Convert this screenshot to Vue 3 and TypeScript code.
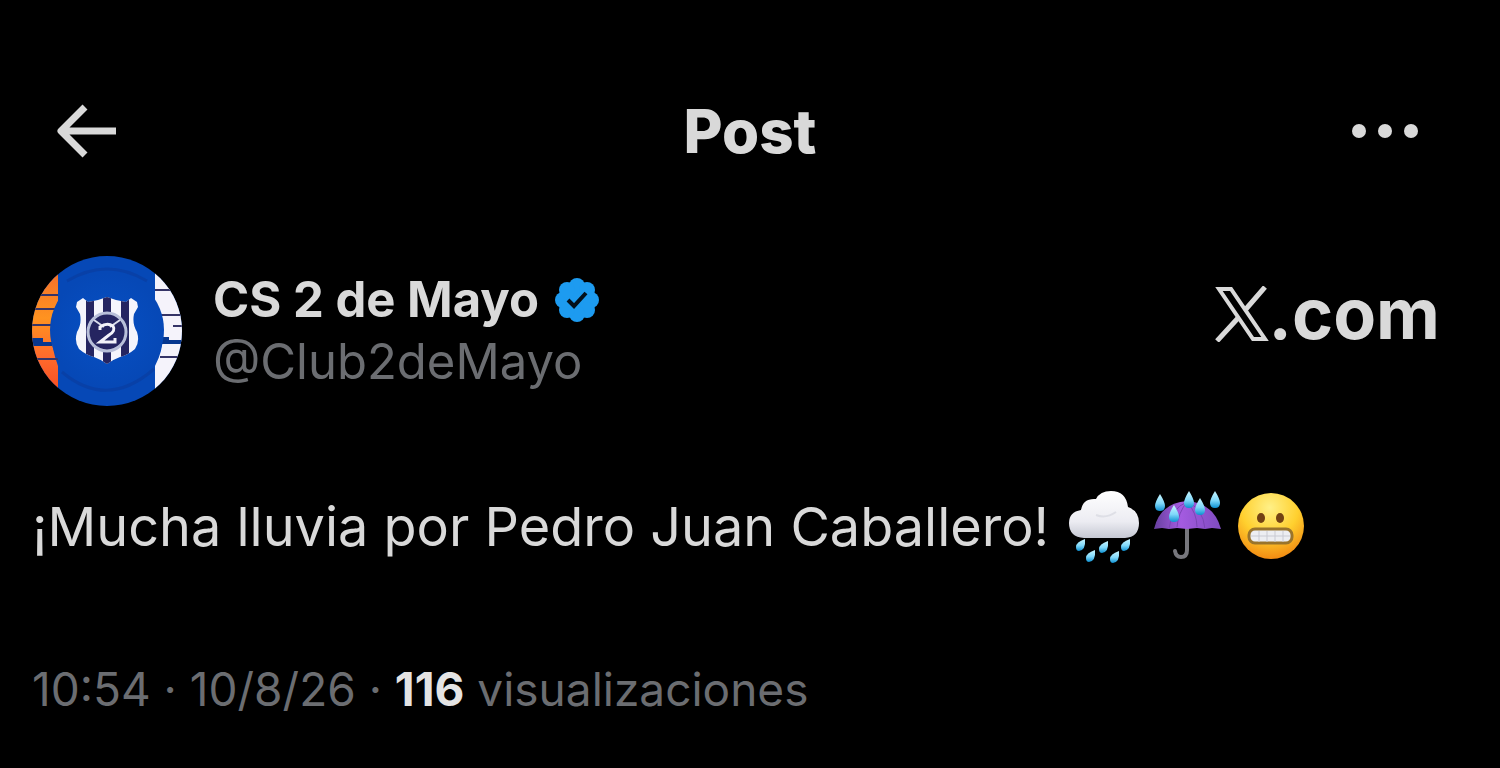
<script setup lang="ts">
interface Post {
  name: string
  handle: string
  body: string
  time: string
  date: string
  views: number
}

const post: Post = {
  name: 'CS 2 de Mayo',
  handle: '@Club2deMayo',
  body: '¡Mucha lluvia por Pedro Juan Caballero!',
  time: '10:54',
  date: '10/8/26',
  views: 116,
}

// Tips of the drops around the umbrella
const umbrellaDrops: [number, number][] = [[7, 3], [36, 0], [62, 0], [21, 14], [47, 7]]
// Drops falling below the cloud
const cloudDrops: [number, number][] = [[9, 48], [32, 50], [54, 48], [19, 59], [43, 60]]
</script>

<template>
  <main class="page">
    <header class="bar">
      <button class="icon-button" type="button" aria-label="Atrás">
        <svg width="60" height="54" viewBox="0 0 60 54" fill="none" stroke="currentColor" stroke-width="7" stroke-linejoin="round">
          <path d="M29 3 5 27l24 24M5 27h55" />
        </svg>
      </button>
      <h1 class="title">Post</h1>
      <button class="icon-button end" type="button" aria-label="Más opciones">
        <svg width="66" height="16" viewBox="0 0 66 16" fill="currentColor">
          <circle cx="7" cy="8" r="7" /><circle cx="33" cy="8" r="7" /><circle cx="59" cy="8" r="7" />
        </svg>
      </button>
    </header>

    <article>
      <div class="author">
        <svg class="avatar" width="150" height="150" viewBox="0 0 150 150" role="img" aria-label="Escudo del club">
          <defs>
            <clipPath id="avatar-clip"><circle cx="75" cy="75" r="75" /></clipPath>
            <clipPath id="shield-clip"><path d="M45 46l6-4 5 4 10-2 9-3 9 3 10 2 5-4 6 4 1 5-4 7q-2 10 3 18 3 10-2 17-7 6-15 8-8 3-13 7-5-4-13-7-8-2-15-8-5-7-2-17 5-8 3-18l-4-7z" /></clipPath>
            <linearGradient id="orange" x1="0" y1="0" x2="0" y2="1">
              <stop offset="0" stop-color="#f26b2c" /><stop offset=".4" stop-color="#ff9320" /><stop offset=".7" stop-color="#ff6a2c" /><stop offset="1" stop-color="#f34b22" />
            </linearGradient>
            <radialGradient id="blue">
              <stop offset="0" stop-color="#0750c4" /><stop offset="1" stop-color="#0648b6" />
            </radialGradient>
          </defs>
          <g clip-path="url(#avatar-clip)">
            <rect width="150" height="150" fill="#0648b6" />
            <path d="M0 10h26v35q-13 30 0 65v30H0z" fill="url(#orange)" />
            <path d="M123 10h27v130h-27v-30q16-30 0-65z" fill="#f5f3fb" />
            <g stroke="#353467" stroke-width="2">
              <path d="M0 39h26M0 53h24M0 69h20M0 103h26" />
              <path d="M123 34h27M128 59h22M141 70h9M128 101h22" />
            </g>
            <path d="M0 82h11v4h9v4H0zM130 81h7v3h13v4h-20z" fill="#07378f" />
            <circle cx="75" cy="74" r="57" fill="url(#blue)" />
            <path d="M30 116q45 38 92-3M35 25q40-24 80 0" fill="none" stroke="#0a3795" stroke-width="3" opacity=".45" />
            <g clip-path="url(#shield-clip)">
              <rect x="40" y="38" width="70" height="75" fill="#f5f5fc" />
              <path d="M54 38h8v75h-8zM71 38h8v75h-8zM89 38h8v75h-8z" fill="#252561" />
            </g>
            <circle cx="75" cy="76" r="19" fill="#252561" stroke="#b8bfd9" stroke-width="3" />
            <path d="M62 64l10 7M88 64l-10 7" fill="none" stroke="#d9dcec" stroke-width="2" />
            <path d="M68 74v-3q7-5 13-1 3 5-4 9l-9 7h15v-4" fill="none" stroke="#f2f2fa" stroke-width="3" />
          </g>
        </svg>
        <div class="identity">
          <div class="name-row">
            <strong class="name">{{ post.name }}</strong>
            <svg width="44" height="44" viewBox="0 0 44 44" role="img" aria-label="Cuenta verificada">
              <g fill="#1d9bf0">
                <circle cx="22" cy="22" r="18" />
                <circle cx="22" cy="8" r="8" /><circle cx="32" cy="12" r="8" />
                <circle cx="36" cy="22" r="8" /><circle cx="32" cy="32" r="8" />
                <circle cx="22" cy="36" r="8" /><circle cx="12" cy="32" r="8" />
                <circle cx="8" cy="22" r="8" /><circle cx="12" cy="12" r="8" />
              </g>
              <path d="M13 22l6 6 12-13" fill="none" stroke="#03101c" stroke-width="4" />
            </svg>
          </div>
          <a class="handle" href="#">{{ post.handle }}</a>
        </div>
        <div class="brand">
          <svg width="54" height="56" viewBox="0 0 54 56" fill="none" stroke="currentColor" stroke-width="4" role="img" aria-label="X">
            <path d="M4 3h12l34 50H38z" />
            <path d="M50 1 31 23M2 55l22-24" stroke-width="5" />
          </svg>
          <span>.com</span>
        </div>
      </div>

      <p class="body">
        <span>{{ post.body }}</span>
        <span class="emojis">
          <svg width="70" height="72" viewBox="0 0 70 72" role="img" aria-label="Nube con lluvia">
            <defs>
              <linearGradient id="cloud" x1="0" y1="0" x2="0" y2="1">
                <stop offset="0" stop-color="#fff" /><stop offset=".65" stop-color="#ececf2" /><stop offset="1" stop-color="#c5c8d3" />
              </linearGradient>
              <linearGradient id="drop" x1="0" y1="0" x2="0" y2="1">
                <stop offset="0" stop-color="#c8f5ff" /><stop offset=".55" stop-color="#7fd8fa" /><stop offset="1" stop-color="#0c8fd0" />
              </linearGradient>
            </defs>
            <path d="M15 47Q0 46 0 32q0-11 12-13 2-12 15-11 4-8 15-8 15 0 17 16 11 4 11 16 0 14-14 15z" fill="url(#cloud)" />
            <path d="M27 24q10 4 20-3" fill="none" stroke="#dedfe6" stroke-width="2" />
            <g v-for="([x, y], i) in cloudDrops" :key="i" :transform="`translate(${x} ${y})`">
              <path d="M7 0Q-2 3-2 8q0 4 3 4 7-1 6-12z" fill="url(#drop)" />
            </g>
          </svg>
          <svg width="70" height="72" viewBox="0 0 70 72" role="img" aria-label="Paraguas con gotas de lluvia">
            <defs>
              <linearGradient id="canopy" x1="0" y1="0" x2="1" y2="0">
                <stop offset="0" stop-color="#67409f" /><stop offset=".4" stop-color="#a45be0" /><stop offset="1" stop-color="#7f4bc0" />
              </linearGradient>
            </defs>
            <path d="M34 35v24q0 7-6 7-5 0-6-6" fill="none" stroke="#77777d" stroke-width="4" stroke-linecap="round" />
            <path d="M1 38Q7 12 34 10q27 2 34 28l-9-1-7 1-8-1-10 1-10-1-8 1-7-1z" fill="url(#canopy)" />
            <path d="M34 11Q18 17 16 38M34 11q-9 11-10 25M34 11q10 11 10 25M34 11q16 6 18 27" fill="none" stroke="#7a45b4" stroke-width="1" />
            <g v-for="([x, y], i) in umbrellaDrops" :key="i" :transform="`translate(${x} ${y})`">
              <path d="M0 0Q-5 8-5 12q0 5 5 5t5-5Q5 8 0 0z" fill="url(#drop)" />
            </g>
          </svg>
          <svg width="70" height="72" viewBox="0 0 70 72" role="img" aria-label="Cara haciendo una mueca">
            <defs>
              <radialGradient id="face" cx=".48" cy=".22" r=".78">
                <stop offset="0" stop-color="#fff087" /><stop offset=".55" stop-color="#ffd02f" /><stop offset="1" stop-color="#f28b12" />
              </radialGradient>
            </defs>
            <circle cx="34" cy="35" r="33" fill="url(#face)" />
            <ellipse cx="24" cy="27" rx="4" ry="5" fill="#724113" /><ellipse cx="43" cy="27" rx="4" ry="5" fill="#724113" />
            <rect x="12" y="38" width="43" height="14" rx="6" fill="#edeef2" stroke="#99742c" stroke-width="3" />
            <path d="M14 45h39M22 40v11M30 40v11M38 40v11M46 40v11" stroke="#c9cad2" stroke-width="1" />
          </svg>
        </span>
      </p>

      <footer class="meta">
        <time>{{ post.time }} · {{ post.date }}</time> · <strong>{{ post.views }}</strong> visualizaciones
      </footer>
    </article>
  </main>
</template>

<style>
body {
  margin: 0;
  background: #000;
}
</style>

<style scoped>
.page {
  box-sizing: border-box;
  min-height: 100vh;
  padding: 91px 32px 40px;
  background: #000;
  color: #d9d9d9;
  font-family: Inter, "Liberation Sans", sans-serif;
}
.bar {
  display: grid;
  grid-template-columns: 1fr auto 1fr;
  align-items: center;
  height: 80px;
  padding: 0 50px 0 24px;
  margin-bottom: 85px;
}
.icon-button {
  display: flex;
  justify-self: start;
  padding: 0;
  border: 0;
  background: none;
  color: inherit;
  cursor: pointer;
}
.end {
  justify-self: end;
}
.title {
  margin: 0 0 0 26px;
  font-size: 60px;
  font-weight: 800;
  line-height: 80px;
}
.author {
  display: flex;
  align-items: center;
}
.avatar {
  flex: none;
  margin-right: 31px;
}
.identity {
  display: flex;
  flex-direction: column;
}
.name-row {
  display: flex;
  align-items: center;
  gap: 16px;
}
.name {
  font-size: 49px;
  font-weight: 700;
  line-height: 62px;
}
.handle {
  color: #6b6d71;
  font-size: 49px;
  line-height: 62px;
  text-decoration: none;
}
.brand {
  display: flex;
  align-items: center;
  margin: 0 28px 34px auto;
  font-size: 70px;
  font-weight: 700;
  line-height: 80px;
}
.body {
  display: flex;
  align-items: center;
  flex-wrap: wrap;
  gap: 20px;
  margin: 81px 0 0;
  font-size: 54px;
  line-height: 80px;
}
.emojis {
  display: flex;
  gap: 14px;
}
.meta {
  margin-top: 92px;
  color: #6b6d71;
  font-size: 46px;
  line-height: 60px;
}
.meta strong {
  color: #e4e4e4;
  font-weight: 700;
}
</style>
